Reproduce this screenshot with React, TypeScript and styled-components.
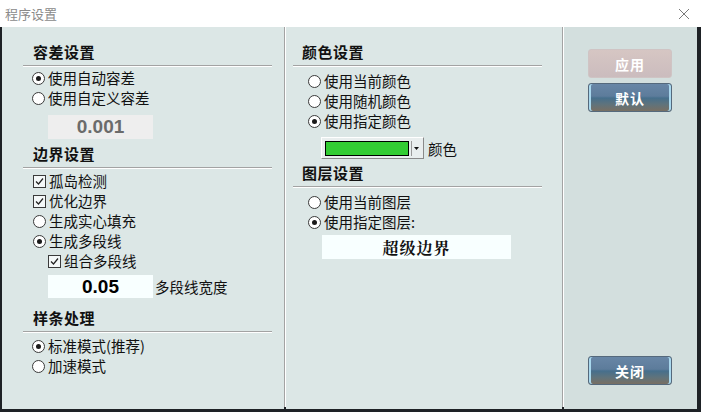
import React from "react";
import styled, { createGlobalStyle } from "styled-components";

const GlobalStyle = createGlobalStyle`
  html, body {
    margin: 0;
    padding: 0;
    background: #1e2226;
  }
  body {
    font-family: "Noto Sans CJK SC", "Noto Sans", sans-serif;
  }
`;

const CJK = `"Noto Sans CJK SC", "Noto Sans", sans-serif`;

const Frame = styled.div`
  width: 701px;
  height: 412px;
  box-sizing: border-box;
  padding: 0 4px 3px 2px;
  background: #1e2226;
  display: flex;
  flex-direction: column;
`;

const TitleBar = styled.div`
  height: 27px;
  flex: none;
  background: #ffffff;
  margin: 0 -4px 0 -2px;
  padding: 0 11px 0 5px;
  display: flex;
  align-items: center;
  justify-content: space-between;
  font-family: ${CJK};
  font-size: 13px;
  color: #8a8a8a;
`;

const Body = styled.div`
  flex: 1;
  display: flex;
  min-height: 0;
`;

const Panel = styled.div<{ $w: number; $pl: number; $pr: number; $pt?: number; $bg?: string }>`
  width: ${(p) => p.$w}px;
  flex: none;
  box-sizing: border-box;
  padding: ${(p) => p.$pt ?? 14}px ${(p) => p.$pr}px 0 ${(p) => p.$pl}px;
  background: ${(p) => p.$bg || "#dce7e6"};
  display: flex;
  flex-direction: column;
`;

const VSep = styled.div`
  width: 2px;
  flex: none;
  margin-bottom: 2px;
  border-left: 1px solid #a3a3a3;
  background: #ffffff;
  box-sizing: border-box;
`;

const Heading = styled.div<{ $indent: number; $mt?: number }>`
  height: 22px;
  line-height: 22px;
  margin-top: ${(p) => p.$mt || 0}px;
  padding-left: ${(p) => p.$indent}px;
  font-family: ${CJK};
  font-weight: 700;
  font-size: 15px;
  letter-spacing: 0.5px;
  color: #111;
`;

const Rule = styled.div`
  height: 1px;
  margin-top: 2px;
  background: #a3a3a3;
  border-bottom: 1px solid #ffffff;
`;

const Rows = styled.div<{ $indent: number; $mt: number }>`
  margin-top: ${(p) => p.$mt}px;
  padding-left: ${(p) => p.$indent}px;
  display: flex;
  flex-direction: column;
`;

const Row = styled.div<{ $sub?: boolean }>`
  height: 20px;
  display: flex;
  align-items: center;
  gap: 3px;
  padding-left: ${(p) => (p.$sub ? 15 : 0)}px;
  font-family: ${CJK};
  font-size: 14.5px;
  line-height: 20px;
  color: #111;
  white-space: nowrap;
`;

const RadioDot = styled.span<{ $on?: boolean }>`
  width: 13px;
  height: 13px;
  flex: none;
  box-sizing: border-box;
  border-radius: 50%;
  border: 1px solid #3a3a3a;
  background: #ffffff;
  display: flex;
  align-items: center;
  justify-content: center;
  &::after {
    content: "";
    width: 5px;
    height: 5px;
    border-radius: 50%;
    background: ${(p) => (p.$on ? "#1a1a1a" : "transparent")};
  }
`;

const CheckBox = styled.span`
  width: 13px;
  height: 13px;
  flex: none;
  box-sizing: border-box;
  border: 1px solid #3a3a3a;
  background: #f4f8f8;
  display: flex;
  align-items: center;
  justify-content: center;
`;

const ValueLine = styled.div<{ $mt: number }>`
  margin-top: ${(p) => p.$mt}px;
  padding-left: 25px;
  display: flex;
  align-items: center;
  gap: 2px;
  font-family: ${CJK};
  font-size: 14.5px;
  color: #111;
`;

const ValueBox = styled.div<{ $h: number; $dim?: boolean }>`
  width: 105px;
  height: ${(p) => p.$h}px;
  display: flex;
  align-items: center;
  justify-content: center;
  background: ${(p) => (p.$dim ? "#eeeeee" : "#f8ffff")};
  font-family: "Liberation Sans", Arial, sans-serif;
  font-weight: 700;
  font-size: 19px;
  color: ${(p) => (p.$dim ? "#6b6b6b" : "#000")};
`;

const ColorLine = styled.div`
  margin-top: 6px;
  padding-left: 28px;
  display: flex;
  align-items: center;
  gap: 4px;
  font-family: ${CJK};
  font-size: 14.5px;
  color: #111;
`;

const ColorCombo = styled.div`
  width: 103px;
  height: 22px;
  box-sizing: border-box;
  display: flex;
  align-items: stretch;
  padding: 3px 2px 2px 3px;
  background: #e9eeee;
  border-top: 1px solid #ffffff;
  border-left: 1px solid #ffffff;
  border-right: 1px solid #8a8a8a;
  border-bottom: 1px solid #8a8a8a;
`;

const Swatch = styled.div<{ $c: string }>`
  flex: 1;
  background: ${(p) => p.$c};
  border: 1px solid #000;
`;

const ComboArrow = styled.div`
  width: 9px;
  margin-left: 2px;
  border-left: 1px solid #9a9a9a;
  display: flex;
  align-items: center;
  justify-content: center;
`;

const LayerBox = styled.div`
  margin: 3px 0 0 29px;
  width: 189px;
  height: 24px;
  display: flex;
  align-items: center;
  justify-content: center;
  background: #f8ffff;
  font-family: "Noto Serif CJK SC", ${CJK};
  font-weight: 700;
  font-size: 16px;
  letter-spacing: 1px;
  color: #111;
`;

const ButtonColumn = styled.div`
  flex: 1;
  display: flex;
  flex-direction: column;
  gap: 5px;
  padding: 22px 0 24px 24px;
`;

const Btn = styled.div<{ $off?: boolean; $push?: boolean }>`
  width: 84px;
  height: 29px;
  box-sizing: border-box;
  margin-top: ${(p) => (p.$push ? "auto" : "0")};
  border-radius: 3px;
  display: flex;
  align-items: center;
  justify-content: center;
  font-family: ${CJK};
  font-weight: 700;
  font-size: 14px;
  letter-spacing: 1px;
  color: #ffffff;
  background: ${(p) =>
    p.$off
      ? "linear-gradient(#d6c6c3, #cbbcbe)"
      : "linear-gradient(#6886a6 0%, #5d7c9b 45%, #466f8c 52%, #5f737c 75%, #786f63 100%)"};
  border: 1px solid ${(p) => (p.$off ? "#cfc4c4" : "#55697c")};
  box-shadow: ${(p) =>
    p.$off ? "none" : "inset 2px 0 0 #a9d8ee, inset -2px 0 0 #a9d8ee"};
`;

const Close = () => (
  <svg width="12" height="12" viewBox="0 0 12 12">
    <path d="M1 1 L11 11 M11 1 L1 11" stroke="#7a7a7a" strokeWidth="1" />
  </svg>
);

const Check = () => (
  <svg width="11" height="11" viewBox="0 0 11 11">
    <path d="M2 5.5 L4.5 8 L9 2.5" fill="none" stroke="#222" strokeWidth="1.2" />
  </svg>
);

const Radio = ({ on, label }: { on?: boolean; label: string }) => (
  <Row>
    <RadioDot $on={on} />
    {label}
  </Row>
);

const Box = ({ label, sub }: { label: string; sub?: boolean }) => (
  <Row $sub={sub}>
    <CheckBox>
      <Check />
    </CheckBox>
    {label}
  </Row>
);

export default function App() {
  return (
    <>
      <GlobalStyle />
      <Frame>
        <TitleBar>
          <span>程序设置</span>
          <Close />
        </TitleBar>
        <Body>
          <Panel $w={282} $pl={21} $pr={12}>
            <Heading $indent={10}>容差设置</Heading>
            <Rule />
            <Rows $indent={9} $mt={1}>
              <Radio on label="使用自动容差" />
              <Radio label="使用自定义容差" />
            </Rows>
            <ValueLine $mt={7}>
              <ValueBox $h={24} $dim>
                0.001
              </ValueBox>
            </ValueLine>
            <Heading $indent={10} $mt={4}>
              边界设置
            </Heading>
            <Rule />
            <Rows $indent={10} $mt={2}>
              <Box label="孤岛检测" />
              <Box label="优化边界" />
              <Radio label="生成实心填充" />
              <Radio on label="生成多段线" />
              <Box sub label="组合多段线" />
            </Rows>
            <ValueLine $mt={4}>
              <ValueBox $h={23}>0.05</ValueBox>
              多段线宽度
            </ValueLine>
            <Heading $indent={10} $mt={9}>
              样条处理
            </Heading>
            <Rule />
            <Rows $indent={9} $mt={3}>
              <Radio on label="标准模式(推荐)" />
              <Radio label="加速模式" />
            </Rows>
          </Panel>
          <VSep />
          <Panel $w={276} $pl={7} $pr={20}>
            <Heading $indent={9}>颜色设置</Heading>
            <Rule />
            <Rows $indent={15} $mt={4}>
              <Radio label="使用当前颜色" />
              <Radio label="使用随机颜色" />
              <Radio on label="使用指定颜色" />
            </Rows>
            <ColorLine>
              <ColorCombo>
                <Swatch $c="#33cc33" />
                <ComboArrow>
                  <svg width="5" height="3" viewBox="0 0 5 3">
                    <path d="M0 0 H5 L2.5 3 Z" fill="#111" />
                  </svg>
                </ComboArrow>
              </ColorCombo>
              颜色
            </ColorLine>
            <Heading $indent={9} $mt={3}>
              图层设置
            </Heading>
            <Rule />
            <Rows $indent={15} $mt={4}>
              <Radio label="使用当前图层" />
              <Radio on label="使用指定图层:" />
            </Rows>
            <LayerBox>超级边界</LayerBox>
          </Panel>
          <VSep />
          <Panel $w={133} $pl={0} $pr={0} $pt={0} $bg="#d3dfde">
            <ButtonColumn>
              <Btn $off>应用</Btn>
              <Btn>默认</Btn>
              <Btn $push>关闭</Btn>
            </ButtonColumn>
          </Panel>
        </Body>
      </Frame>
    </>
  );
}
